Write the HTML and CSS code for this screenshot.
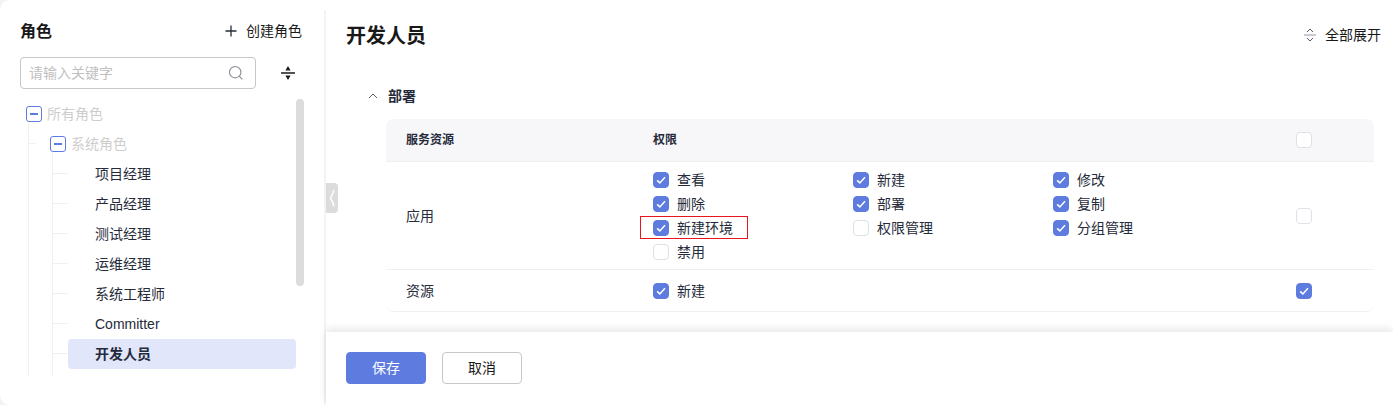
FILE: index.html
```html
<!DOCTYPE html>
<html lang="zh-CN">
<head>
<meta charset="utf-8">
<title>角色</title>
<link rel="stylesheet" href="styles.css">
</head>
<body>
<div class="page">
  <aside class="side">
    <div class="side-head">
      <h2 class="side-title">角色</h2>
      <div class="create">
        <svg class="create-icon" width="12" height="12" viewBox="0 0 12 12"><path d="M6 .5v11M.5 6h11" stroke="#252b3a" stroke-width="1.3" fill="none"/></svg>
        <span>创建角色</span>
      </div>
    </div>
    <div class="search-row">
      <div class="search">
        <span class="placeholder">请输入关键字</span>
        <svg width="16" height="16" viewBox="0 0 16 16"><circle cx="7.2" cy="7.2" r="5.7" stroke="#8a8e99" stroke-width="1.1" fill="none"/><path d="M11.4 11.4l3 3" stroke="#8a8e99" stroke-width="1.1" fill="none"/></svg>
      </div>
      <svg class="collapse-icon" width="16" height="16" viewBox="0 0 16 16"><path d="M1 8h14" stroke="#191919" stroke-width="1.5"/><path d="M8 1l2.6 4.4H5.4zM8 15l-2.6-4.4h5.2z" fill="#191919"/></svg>
    </div>
    <div class="tree-wrap">
      <div class="tree">
        <div class="node lvl0"><span class="minus"></span><span class="muted">所有角色</span></div>
        <div class="node lvl1"><span class="minus"></span><span class="muted">系统角色</span></div>
        <div class="node leaf"><span class="leaf-label">项目经理</span></div>
        <div class="node leaf"><span class="leaf-label">产品经理</span></div>
        <div class="node leaf"><span class="leaf-label">测试经理</span></div>
        <div class="node leaf"><span class="leaf-label">运维经理</span></div>
        <div class="node leaf"><span class="leaf-label">系统工程师</span></div>
        <div class="node leaf"><span class="leaf-label">Committer</span></div>
        <div class="node leaf active"><span class="leaf-label">开发人员</span></div>
      </div>
      <div class="scroll-track"><div class="scroll-thumb"></div></div>
    </div>
  </aside>
  <div class="main-wrap">
  <main class="main">
    <div class="handle"><svg width="6" height="18" viewBox="0 0 6 18"><path d="M4.8 .8C4.4 4.8 2.4 7 1.4 9C2.4 11 4.4 13.2 4.8 17.2" stroke="#fff" stroke-width="1.5" fill="none"/></svg></div>
    <div class="main-body">
      <div class="main-head">
        <h1 class="main-title">开发人员</h1>
        <div class="expand">
          <svg width="12" height="14" viewBox="0 0 12 14"><path d="M3 4l3-3 3 3M3 10l3 3 3-3" stroke="#575d6c" fill="none"/><path d="M0 7h12" stroke="#b4b4bd" stroke-width="1.4"/></svg>
          <span>全部展开</span>
        </div>
      </div>
      <div class="section-head">
        <svg width="10" height="6" viewBox="0 0 10 6"><path d="M1 5l4-4 4 4" stroke="#575d6c" fill="none"/></svg>
        <span>部署</span>
      </div>
      <div class="table">
        <div class="row head">
          <div class="c-name">服务资源</div>
          <div class="c-perm">权限</div>
          <div class="c-all"><span class="box"></span></div>
        </div>
        <div class="row">
          <div class="c-name">应用</div>
          <div class="c-perm perm-grid">
            <label class="item"><span class="box on"><svg viewBox="0 0 16 16"><path d="M3.6 8.4l3.1 2.9 5.8-6.4"/></svg></span>查看</label>
            <label class="item"><span class="box on"><svg viewBox="0 0 16 16"><path d="M3.6 8.4l3.1 2.9 5.8-6.4"/></svg></span>新建</label>
            <label class="item"><span class="box on"><svg viewBox="0 0 16 16"><path d="M3.6 8.4l3.1 2.9 5.8-6.4"/></svg></span>修改</label>
            <label class="item"><span class="box on"><svg viewBox="0 0 16 16"><path d="M3.6 8.4l3.1 2.9 5.8-6.4"/></svg></span>删除</label>
            <label class="item"><span class="box on"><svg viewBox="0 0 16 16"><path d="M3.6 8.4l3.1 2.9 5.8-6.4"/></svg></span>部署</label>
            <label class="item"><span class="box on"><svg viewBox="0 0 16 16"><path d="M3.6 8.4l3.1 2.9 5.8-6.4"/></svg></span>复制</label>
            <label class="item marked"><span class="box on"><svg viewBox="0 0 16 16"><path d="M3.6 8.4l3.1 2.9 5.8-6.4"/></svg></span>新建环境</label>
            <label class="item"><span class="box"></span>权限管理</label>
            <label class="item"><span class="box on"><svg viewBox="0 0 16 16"><path d="M3.6 8.4l3.1 2.9 5.8-6.4"/></svg></span>分组管理</label>
            <label class="item"><span class="box"></span>禁用</label>
          </div>
          <div class="c-all"><span class="box"></span></div>
        </div>
        <div class="row last">
          <div class="c-name">资源</div>
          <div class="c-perm perm-grid">
            <label class="item"><span class="box on"><svg viewBox="0 0 16 16"><path d="M3.6 8.4l3.1 2.9 5.8-6.4"/></svg></span>新建</label>
          </div>
          <div class="c-all"><span class="box on"><svg viewBox="0 0 16 16"><path d="M3.6 8.4l3.1 2.9 5.8-6.4"/></svg></span></div>
        </div>
      </div>
    </div>
    <footer class="footer">
      <button class="btn primary">保存</button>
      <button class="btn">取消</button>
    </footer>
  </main>
  </div>
</div>
</body>
</html>
```
FILE: styles.css
```css
* { box-sizing: border-box; }
html, body { margin: 0; height: 100%; }
body {
  background: #f3f3f5;
  overflow: hidden;
  font-family: "Liberation Sans", "Noto Sans CJK SC", sans-serif;
  font-size: 14px;
  line-height: 20px;
  color: #252b3a;
}
.page { display: flex; height: 405px; background: #f3f3f5; }
.side {
  width: 324px;
  flex: none;
  background: #fff;
  border-radius: 10px 0 0 10px;
  padding: 20px 0 0 20px;
}
.side-head {
  display: flex;
  justify-content: space-between;
  align-items: center;
  height: 24px;
  padding-right: 22px;
}
.side-title { margin: 0; font-size: 16px; font-weight: 700; color: #191919; line-height: 24px; }
.create { display: flex; align-items: center; gap: 9px; color: #191919; padding-bottom: 2px; }
.create-icon { display: block; }
.search-row { display: flex; align-items: center; margin-top: 13px; }
.search {
  width: 236px;
  height: 32px;
  border: 1px solid #c7c7c7;
  border-radius: 4px;
  display: flex;
  align-items: center;
  justify-content: space-between;
  padding: 0 11px 0 8px;
}
.placeholder { color: #bfbfbf; }
.collapse-icon { margin-left: 24px; }
.tree-wrap { display: flex; margin-top: 10px; height: 277px; overflow: hidden; }
.tree { width: 276px; flex: none; position: relative; }
.node { height: 30px; display: flex; align-items: center; position: relative; white-space: nowrap; }
.lvl0 { padding-left: 6px; }
.lvl1 { padding-left: 30px; }
.leaf { padding-left: 48px; }
.leaf-label { flex: 1; height: 30px; line-height: 30px; padding-left: 27px; border-radius: 4px; }
.muted { color: #cdcdcd; margin-left: 5px; }
.minus {
  width: 16px;
  height: 16px;
  flex: none;
  border: 1px solid #5e7ce0;
  border-radius: 3px;
  background: #fff;
  display: flex;
  align-items: center;
  justify-content: center;
}
.minus::before { content: ""; width: 8px; height: 2px; background: #5e7ce0; }
.lvl1::before { content: ""; position: absolute; left: 8px; top: 14px; width: 8px; height: 1px; background: #f0f0f0; }
.lvl1::after { content: ""; position: absolute; left: 8px; top: -6px; width: 1px; height: 300px; background: #f0f0f0; }
.leaf::before { content: ""; position: absolute; left: 32px; top: 14px; width: 16px; height: 1px; background: #f0f0f0; }
.leaf::after { content: ""; position: absolute; left: 32px; top: 0; width: 1px; height: 30px; background: #f0f0f0; }
.lvl1 + .leaf::after { top: -6px; height: 36px; }
.active .leaf-label { font-weight: 700; background: #e1e6fa; }
.leaf.active::after { height: 90px; }
.scroll-track { width: 8px; flex: none; }
.scroll-thumb { width: 8px; height: 187px; border-radius: 4px; background: #dcdcdc; }
.main-wrap { flex: 1; min-width: 0; background: #fff; padding-top: 10px; display: flex; }
.main {
  flex: 1;
  min-width: 0;
  position: relative;
  display: flex;
  flex-direction: column;
  border-left: 2px solid #f3f3f3;
}
.handle {
  position: absolute;
  left: 0;
  top: 173px;
  width: 12px;
  height: 30px;
  background: #dcdcdc;
  border-radius: 0 4px 4px 0;
  display: flex;
  align-items: center;
  justify-content: center;
}
.main-body { flex: 1; padding: 10px 19px 0 20px; }
.main-head { display: flex; justify-content: space-between; align-items: center; height: 30px; }
.main-title { margin: 0; padding-top: 2px; font-size: 20px; font-weight: 700; line-height: 30px; color: #191919; }
.expand { display: flex; align-items: center; gap: 9px; margin-right: -7px; color: #191919; }
.expand svg { display: block; }
.section-head { display: flex; align-items: center; gap: 10px; height: 22px; margin-top: 35px; padding-left: 22px; font-weight: 700; }
.table { margin: 12px 0 0 40px; width: 988px; }
.row { display: flex; align-items: center; border-bottom: 1px solid #f0f0f2; }
.row.head { height: 43px; background: #f7f7f9; border-radius: 8px 8px 0 0; font-size: 12px; font-weight: 700; }
.row.last { height: 42px; border-radius: 0 0 8px 8px; }
.c-name { width: 267px; padding-left: 20px; flex: none; }
.c-perm { width: 643px; flex: none; }
.c-all { flex: 1; display: flex; }
.perm-grid { display: grid; grid-template-columns: repeat(3, 200px); grid-auto-rows: 24px; padding: 6px 0 5px; }
.row.last .perm-grid { padding: 0; }
.item { display: flex; align-items: center; gap: 8px; position: relative; }
.marked::after {
  content: "";
  position: absolute;
  left: -13px;
  top: 0;
  box-sizing: border-box;
  width: 108px;
  height: 23px;
  border: 1px solid #e8141e;
}
.box {
  width: 16px;
  height: 16px;
  flex: none;
  display: block;
  background: #fff;
  border: 1px solid #dfe1e6;
  border-radius: 4px;
}
.box.on { background: #5e7ce0; border-color: #5e7ce0; }
.box svg { display: block; width: 14px; height: 14px; fill: none; stroke: #fff; stroke-width: 1.7; }
.footer {
  flex: none;
  height: 73px;
  background: #fff;
  box-shadow: 0 -3px 8px rgba(0, 0, 0, 0.1);
  display: flex;
  gap: 16px;
  padding: 20px 20px 0;
  position: relative;
}
.btn {
  width: 80px;
  height: 32px;
  border: 1px solid #c7c7c7;
  border-radius: 4px;
  background: #fff;
  font: inherit;
  color: #191919;
  padding: 0;
}
.btn.primary { background: #5e7ce0; border-color: #5e7ce0; color: #fff; }
```
